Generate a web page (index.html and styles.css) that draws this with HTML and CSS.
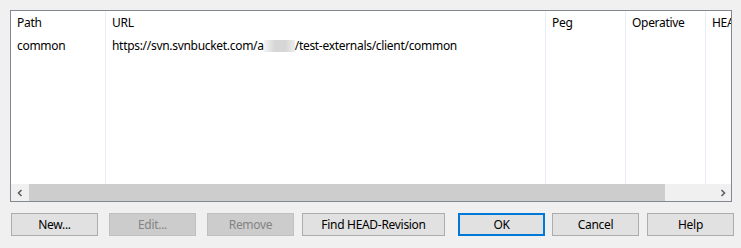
FILE: index.html
```html
<!DOCTYPE html>
<html lang="en">
<head>
    <meta charset="UTF-8">
    <title>Externals</title>
    <link rel="stylesheet" href="styles.css">
</head>
<body>
    <div class="list">
        <div class="columns">
            <div class="col col-path">
                <div class="cell">Path</div>
                <div class="cell">common</div>
            </div>
            <div class="col col-url">
                <div class="cell">URL</div>
                <div class="cell">https://svn.svnbucket.com/a<span class="blur"></span>/test-externals/client/common</div>
            </div>
            <div class="col col-peg">
                <div class="cell">Peg</div>
            </div>
            <div class="col col-op">
                <div class="cell">Operative</div>
            </div>
            <div class="col col-head">
                <div class="cell">HEAD-Revision</div>
            </div>
        </div>
        <div class="hscroll">
            <div class="arrow">
                <svg width="8" height="8" viewBox="0 0 8 8"><path d="M5.5 1 L2.5 4 L5.5 7" fill="none" stroke="#606060" stroke-width="1.6"/></svg>
            </div>
            <div class="track">
                <div class="thumb"></div>
            </div>
            <div class="arrow">
                <svg width="8" height="8" viewBox="0 0 8 8"><path d="M2.5 1 L5.5 4 L2.5 7" fill="none" stroke="#606060" stroke-width="1.6"/></svg>
            </div>
        </div>
    </div>

    <div class="buttons">
        <button class="btn">New...</button>
        <button class="btn btn-gap11" disabled>Edit...</button>
        <button class="btn btn-gap11" disabled>Remove</button>
        <button class="btn btn-find">Find HEAD-Revision</button>
        <button class="btn btn-ok">OK</button>
        <button class="btn btn-cancel">Cancel</button>
        <button class="btn btn-help">Help</button>
    </div>
</body>
</html>
```
FILE: styles.css
```css
body {
    margin: 0;
    padding: 10px 0 0 10px;
    background-color: #f0f0f0;
    font-family: "Noto Sans", "Open Sans", sans-serif;
    font-size: 12px;
    letter-spacing: -0.3px;
    color: #000;
}
.list {
    width: 720px;
    height: 190px;
    border: 1px solid #828790;
    background-color: #fff;
    display: flex;
    flex-direction: column;
}
.columns {
    flex: 1;
    display: flex;
    overflow: hidden;
}
.col {
    border-right: 1px solid #e8eef7;
    box-sizing: border-box;
    flex-shrink: 0;
    overflow: hidden;
    white-space: nowrap;
}
.col-path { width: 95px; }
.col-url { width: 440px; }
.col-peg { width: 80px; }
.col-op { width: 80px; }
.col-head { width: 80px; border-right: none; }
.cell {
    height: 22px;
    line-height: 22px;
    padding-left: 6px;
    padding-top: 1px;
}
.blur {
    display: inline-block;
    width: 31px;
    height: 12px;
    vertical-align: -2px;
    background: linear-gradient(90deg, #f4f4f4, #d6d6d6 35%, #d6d6d6 70%, #eeeeee);
}
.hscroll {
    height: 17px;
    display: flex;
    background-color: #f0f0f0;
}
.arrow {
    width: 17px;
    display: flex;
    align-items: center;
    justify-content: center;
}
.track {
    flex: 1;
    display: flex;
    padding-left: 1px;
}
.thumb {
    width: 636px;
    background-color: #cdcdcd;
}
.buttons {
    display: flex;
    margin-top: 11px;
    padding-left: 1px;
}
.btn {
    width: 87px;
    height: 23px;
    margin: 0;
    padding: 0;
    flex-shrink: 0;
    border: 1px solid #adadad;
    background-color: #e1e1e1;
    font-family: inherit;
    font-size: 12px;
    letter-spacing: -0.3px;
    color: #000;
    box-sizing: border-box;
}
.btn:disabled {
    background-color: #cccccc;
    border-color: #bfbfbf;
    color: #838383;
}
.btn-gap11 { margin-left: 11px; }
.btn-find { width: 143px; margin-left: 8px; }
.btn-ok {
    margin-left: 13px;
    border: 2px solid #0078d7;
}
.btn-cancel { margin-left: 7px; }
.btn-help { margin-left: 8px; }
```
